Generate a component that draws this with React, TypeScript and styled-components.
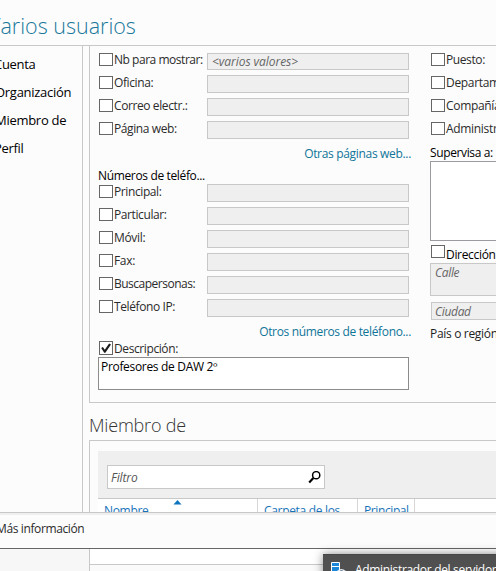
import React from "react";
import styled, { createGlobalStyle } from "styled-components";

const GlobalStyle = createGlobalStyle`
  * { box-sizing: border-box; }
  body { margin: 0; overflow: hidden; background: #fcfcfc; }
`;

const Window = styled.div`
  position: relative;
  width: 496px;
  height: 571px;
  overflow: hidden;
  display: flex;
  flex-direction: column;
  background: #fcfcfc;
  color: #1e1e1e;
  font: 12px/16px "Open Sans", "Noto Sans", sans-serif;
  white-space: nowrap;
`;

const Text = styled.span<{ $spacing?: number }>`
  letter-spacing: ${(p) => p.$spacing ?? -0.32}px;
`;

const Title = styled.h1`
  margin: 0 0 0 -12px;
  height: 45px;
  padding-top: 11px;
  font-size: 21.5px;
  line-height: 30px;
  font-weight: 300;
  color: #19789a;
`;

const Body = styled.div`
  display: flex;
  height: 467px;
  overflow: hidden;
  border-top: 1px solid #c8c8c8;
`;

const Sidebar = styled.nav`
  flex: none;
  width: 83px;
  margin-right: 6px;
  border-right: 1px solid #c8c8c8;
  padding-top: 4px;
  color: #000;
`;

const NavItem = styled.div<{ $shift: number }>`
  height: 28px;
  line-height: 28px;
  font-size: 13px;
  margin-left: ${(p) => p.$shift}px;
`;

const Main = styled.main`
  flex: none;
  width: 407px;
`;

const Panel = styled.section`
  display: flex;
  height: 357px;
  border-left: 1px solid #c8c8c8;
  border-bottom: 1px solid #c8c8c8;
  padding: 7px 0 0 8px;
  overflow: hidden;
`;

const LeftColumn = styled.div`
  flex: none;
  width: 332px;
`;

const RightColumn = styled.div`
  flex: none;
  width: 130px;
`;

const Row = styled.div<{ $height?: number }>`
  display: flex;
  height: ${(p) => p.$height ?? 23}px;
`;

const Check = styled.span<{ $tall?: boolean }>`
  flex: none;
  display: flex;
  width: 14px;
  height: ${(p) => (p.$tall ? 14 : 13)}px;
  margin: 0 1px;
  border: 1px solid #666;
  background: #fff;
`;

const Label = styled.label<{ $drop?: number; $dark?: boolean }>`
  width: 93px;
  height: 16px;
  margin-top: ${(p) => p.$drop ?? -1}px;
  color: ${(p) => (p.$dark ? "#000" : "#2b2b2b")};
`;

const Field = styled.div<{ $first?: boolean }>`
  width: 202px;
  height: ${(p) => (p.$first ? 17 : 18)}px;
  margin-top: ${(p) => (p.$first ? 0 : -1)}px;
  border: 1px solid #c8c8c8;
  background: #efefef;
  padding-left: 4px;
  font-style: italic;
  line-height: 16px;
  color: #666;
`;

const LinkLine = styled.div<{ $top: number; $bottom: number }>`
  width: 313px;
  height: 16px;
  margin: ${(p) => p.$top}px 0 ${(p) => p.$bottom}px;
  text-align: right;
  color: #0f7599;
`;

const GroupHeading = styled.div<{ $height?: number }>`
  height: ${(p) => p.$height ?? 16}px;
  color: #000;
`;

const Description = styled.div`
  width: 311px;
  height: 33px;
  border: 1px solid #8c8c8c;
  background: #fff;
  padding: 1px 2px;
  color: #000;
`;

const ListBox = styled.div`
  height: 80px;
  border: 1px solid #999ba0;
  background: #fff;
  margin-bottom: 4px;
`;

const AddressBox = styled.div<{ $street?: boolean }>`
  height: ${(p) => (p.$street ? 33 : 18)}px;
  margin-left: ${(p) => (p.$street ? 0 : 1)}px;
  margin-bottom: 6px;
  border: 1px solid #c8c8c8;
  background: #efefef;
  padding-left: ${(p) => (p.$street ? 4 : 3)}px;
  font-style: italic;
  line-height: ${(p) => (p.$street ? 18 : 17)}px;
  color: #666;
`;

const SectionTitle = styled.h2`
  margin: 0;
  height: 37px;
  padding: 8px 0 0 0;
  font-size: 18px;
  line-height: 28px;
  font-weight: 300;
  color: #333;
`;

const Members = styled.section`
  border: 1px solid #c8c8c8;
  border-width: 1px 0 0 1px;
  padding: 10px 0 0 8px;
`;

const Toolbar = styled.div`
  height: 47px;
  padding: 14px 0 0 9px;
  background: #efefef;
`;

const Filter = styled.div`
  display: flex;
  justify-content: space-between;
  align-items: center;
  width: 218px;
  height: 24px;
  border: 1px solid #c8c8c8;
  background: #fff;
  padding: 2px 3px 0 3px;
  font-style: italic;
  color: #555;
`;

const TableHead = styled.div`
  display: grid;
  grid-template-columns: 160px 100px 57px 1fr;
  height: 30px;
  border-top: 1px solid #c8c8c8;
  background: #fff;
  color: #1873b9;
`;

const HeadCell = styled.div`
  position: relative;
  padding: 4px 0 0 6px;
  border-right: 1px solid #d6d6d6;

  &:last-child { border-right: 0; }
`;

const SortMark = styled.svg`
  position: absolute;
  left: 75px;
  top: 1px;
`;

const Footer = styled.footer`
  flex: none;
  height: 37px;
  border-top: 1px solid #c8c8c8;
  border-bottom: 1px solid #666;
  box-shadow: inset 0 2px #efefef;
  padding: 8px 0 0;
  color: #2b2b2b;
`;

const FooterLink = styled.div`
  margin-left: -4px;
`;

const Underlay = styled.div`
  display: flex;
  flex: 1;
  padding-left: 89px;
  background: #f7f7f7;
`;

const UnderlayPanel = styled.div`
  flex: 1;
  border-left: 1px solid #c8c8c8;
  background: #fafafa;
`;

const UnderlayRow = styled.div`
  height: 16px;
  background: #fff;
  border-bottom: 1px solid #c8c8c8;
`;

const TaskPreview = styled.div`
  position: absolute;
  left: 323px;
  top: 554px;
  width: 190px;
  height: 30px;
  display: flex;
  gap: 8px;
  padding: 7px 0 0 8px;
  background: #505050;
  border-top: 1px solid #474747;
  box-shadow: 0 0 9px rgba(0, 0, 0, 0.45);
  color: #fff;
`;

const SearchIcon = () => (
  <svg width="13" height="14" viewBox="0 0 13 14" fill="none" stroke="#000">
    <circle cx="8.2" cy="4.2" r="3.6" strokeWidth="1.5" />
    <path d="M5.4 7 1.2 11.4" strokeWidth="2.2" />
  </svg>
);

const CheckMark = () => (
  <svg width="12" height="12" viewBox="0 0 12 12" fill="#1c1c1c">
    <path d="M1.2 6 2.9 5 4.8 7.7 9.1 1.5 11 2.5 5.4 10.7H4.2Z" />
  </svg>
);

const ServerIcon = () => (
  <svg width="16" height="16" viewBox="0 0 16 16">
    <path d="M.5.5h8v13h-8z" fill="#1c86d8" stroke="#fff" />
    <path d="M1 4.5h7" stroke="#fff" />
    <path d="M5 10q5-6 11 0l-4 4H8Z" fill="#e8eef3" />
    <path d="M7.5 10q3-3 6 0" fill="none" stroke="#4b6983" />
  </svg>
);

type Entry = { label: string; spacing?: number; value?: string };

const general: Entry[] = [
  { label: "Nb para mostrar:", value: "<varios valores>", spacing: -0.47 },
  { label: "Oficina:", spacing: -0.4 },
  { label: "Correo electr.:", spacing: -0.4 },
  { label: "Página web:", spacing: -0.4 },
];

const phones: Entry[] = [
  { label: "Principal:", spacing: -0.4 },
  { label: "Particular:", spacing: -0.4 },
  { label: "Móvil:" },
  { label: "Fax:" },
  { label: "Buscapersonas:", spacing: -0.5 },
  { label: "Teléfono IP:", spacing: -0.4 },
];

const job: Entry[] = [
  { label: "Puesto:", spacing: -0.4 },
  { label: "Departamento:" },
  { label: "Compañía:" },
  { label: "Administrador:" },
];

const nav = [
  { label: "Cuenta", shift: -6, spacing: -0.3 },
  { label: "Organización", shift: -5, spacing: -0.28 },
  { label: "Miembro de", shift: -5, spacing: -0.28 },
  { label: "Perfil", shift: -6, spacing: -0.3 },
];

const FieldRow = ({ entry }: { entry: Entry }) => (
  <Row>
    <Check />
    <Label><Text $spacing={entry.spacing}>{entry.label}</Text></Label>
    <Field $first={!!entry.value}>{entry.value && <Text $spacing={-0.05}>{entry.value}</Text>}</Field>
  </Row>
);

export default function App() {
  return (
    <Window>
      <GlobalStyle />
      <Title><Text $spacing={0}>Varios usuarios</Text></Title>
      <Body>
        <Sidebar>
          {nav.map((n) => (
            <NavItem key={n.label} $shift={n.shift}><Text $spacing={n.spacing}>{n.label}</Text></NavItem>
          ))}
        </Sidebar>
        <Main>
          <Panel>
            <LeftColumn>
              {general.map((e) => <FieldRow key={e.label} entry={e} />)}
              <LinkLine $top={1} $bottom={6}><Text>Otras páginas web...</Text></LinkLine>
              <GroupHeading $height={17}><Text $spacing={-0.35}>Números de teléfo...</Text></GroupHeading>
              {phones.map((e) => <FieldRow key={e.label} entry={e} />)}
              <LinkLine $top={1} $bottom={1}><Text $spacing={-0.34}>Otros números de teléfono...</Text></LinkLine>
              <Row $height={16}>
                <Check $tall><CheckMark /></Check>
                <Label $drop={0}><Text $spacing={-0.4}>Descripción:</Text></Label>
              </Row>
              <Description><Text>Profesores de DAW 2º</Text></Description>
            </LeftColumn>
            <RightColumn>
              {job.map((e) => (
                <Row key={e.label}>
                  <Check />
                  <Label><Text $spacing={e.spacing}>{e.label}</Text></Label>
                </Row>
              ))}
              <Row $height={16}><GroupHeading><Text $spacing={-0.38}>Supervisa a:</Text></GroupHeading></Row>
              <ListBox />
              <Row $height={18}>
                <Check />
                <Label $drop={2} $dark><Text>Dirección:</Text></Label>
              </Row>
              <AddressBox $street><Text>Calle</Text></AddressBox>
              <AddressBox><Text>Ciudad</Text></AddressBox>
              <Text>País o región:</Text>
            </RightColumn>
          </Panel>
          <SectionTitle><Text $spacing={-0.2}>Miembro de</Text></SectionTitle>
          <Members>
            <Toolbar>
              <Filter><Text $spacing={-0.1}>Filtro</Text><SearchIcon /></Filter>
            </Toolbar>
            <TableHead>
              <HeadCell>
                <SortMark width="9" height="5" viewBox="0 0 9 5"><path d="M4.5 0 8.5 4.5h-8Z" fill="#0c73bd" /></SortMark>
                <Text>Nombre</Text>
              </HeadCell>
              <HeadCell><Text>Carpeta de los</Text></HeadCell>
              <HeadCell><Text $spacing={-0.4}>Principal</Text></HeadCell>
              <HeadCell />
            </TableHead>
          </Members>
        </Main>
      </Body>
      <Footer><FooterLink><Text $spacing={-0.38}>Más información</Text></FooterLink></Footer>
      <Underlay>
        <UnderlayPanel><UnderlayRow /></UnderlayPanel>
      </Underlay>
      <TaskPreview><ServerIcon /><Text>Administrador del servidor</Text></TaskPreview>
    </Window>
  );
}
